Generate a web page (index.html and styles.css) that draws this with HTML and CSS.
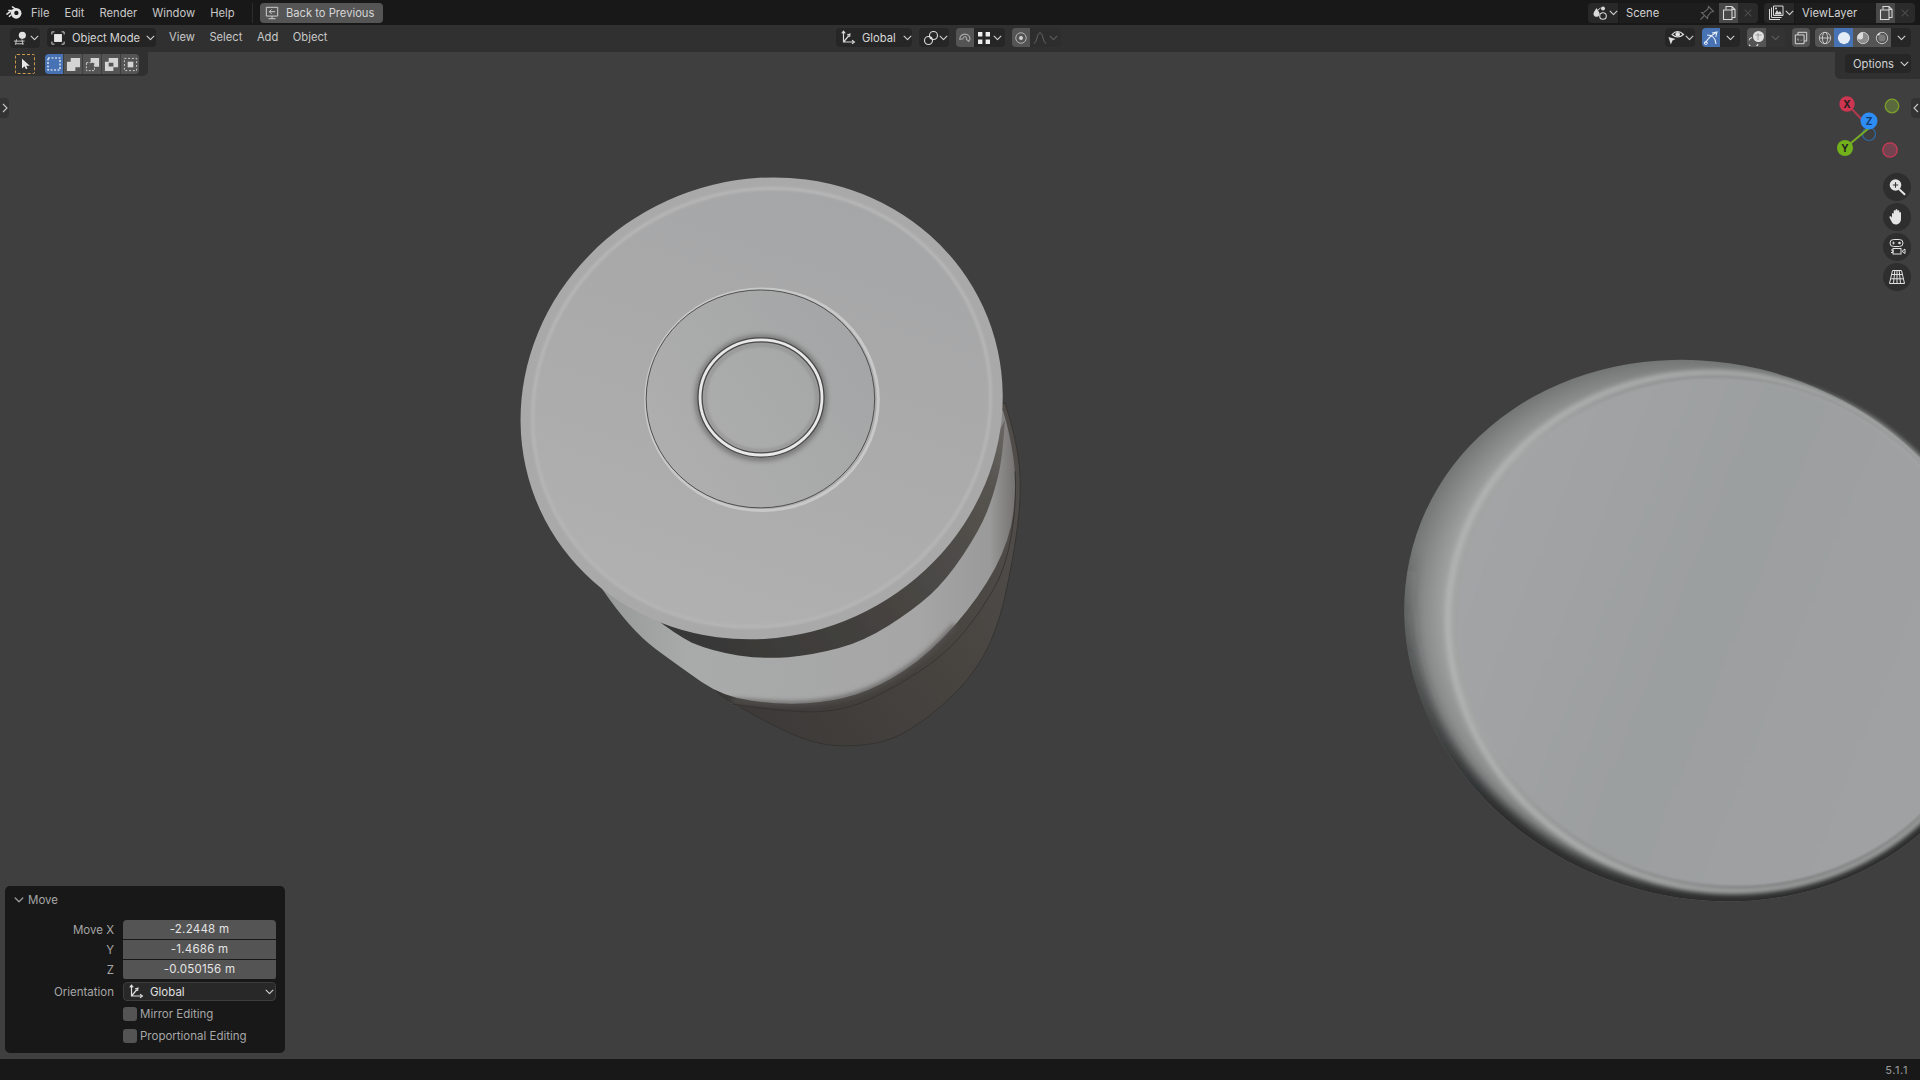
FILE: index.html
```html
<!DOCTYPE html>
<html lang="en">
<head>
<meta charset="utf-8">
<title>Blender</title>
<link rel="stylesheet" href="styles.css">
</head>
<body>
<svg class="defs" aria-hidden="true">
  <symbol id="chev" viewBox="0 0 10 6"><path d="M1.200 1 5 4.800 8.800 1" fill="none" stroke="currentColor" stroke-width="1.300" stroke-linecap="round" stroke-linejoin="round"/></symbol>
  <symbol id="orient" viewBox="0 0 16 16"><path d="M3.500 1.500v10.500h10M3.500 12 9 5.500" fill="none" stroke="currentColor" stroke-width="1.200"/><path d="M1.800 3.400 3.500 1.200 5.200 3.400M12 10.300l2.400 1.700-2.400 1.700M7 5l3-1-.4 3" fill="none" stroke="currentColor" stroke-width="1.100"/></symbol>
  <symbol id="copy" viewBox="0 0 16 16"><path d="M5 4.500V1.500h6l3 3v8H11M11 1.500v3h3" fill="none" stroke="currentColor" stroke-width="1.100"/><path d="M2.500 5H11v9.500H2.500z" fill="none" stroke="currentColor" stroke-width="1.100"/></symbol>
  <symbol id="cross" viewBox="0 0 12 12"><path d="M2 2l8 8M10 2l-8 8" stroke="currentColor" stroke-width="1.300"/></symbol>
</svg>

<header class="topbar">
  <svg class="logo" viewBox="0 0 18 15"><path d="M1 9.200 6 5.600 3 5.400h6.600" fill="none" stroke="#e4e4e4" stroke-width="1.600" stroke-linecap="round" stroke-linejoin="round"/><path d="M6.800 1.600 12 5" stroke="#e4e4e4" stroke-width="1.600" stroke-linecap="round"/><circle cx="10.800" cy="8.400" r="5.600" fill="#e4e4e4"/><circle cx="11" cy="7.900" r="2.300" fill="#181818"/><path d="M5.400 10 3 12" stroke="#e4e4e4" stroke-width="1.600"/></svg>
  <nav class="menu menu-top">
    <span>File</span><span>Edit</span><span>Render</span><span>Window</span><span>Help</span>
  </nav>
  <div class="sep"></div>
  <div class="back">
    <svg class="ico14" viewBox="0 0 16 16"><path d="M1.500 1.500h13v10h-13zM8 11.500v2.800M4 14.500h8M11.500 6.500H5M7.500 4 5 6.500 7.500 9" fill="none" stroke="#d2d2d2" stroke-width="1.100"/></svg>
    <span>Back to Previous</span>
  </div>
  <div class="top-right">
    <div class="idblock">
      <div class="id-browse">
        <svg class="ico16" viewBox="0 0 16 16"><path d="M4.500 3 7 7c1.400 2.400-.2 4.800-2.500 4.800S.6 9.400 2 7z" fill="#d8d8d8"/><circle cx="11" cy="3.400" r="2" fill="#d8d8d8"/><circle cx="11" cy="11" r="3.300" fill="none" stroke="#d8d8d8" stroke-width="1.100"/><path d="M5.600 5.400 8.500 3" stroke="#d8d8d8" stroke-width="1"/></svg>
        <svg class="chev" viewBox="0 0 10 6"><use href="#chev"/></svg>
      </div>
      <div class="id-field scene"><span>Scene</span>
        <svg class="ico16 pin" viewBox="0 0 16 16"><path d="M9.500 1.500 14.500 6.500 11.800 7.200 8.800 11l-.3 2.500-6-6L5 7.200 8.800 4.200zM5 11 1.500 14.500" fill="none" stroke="#666" stroke-width="1.100"/></svg>
      </div>
      <div class="id-btn"><svg class="ico16" viewBox="0 0 16 16"><use href="#copy"/></svg></div>
      <div class="id-x"><svg class="ico10" viewBox="0 0 12 12"><use href="#cross"/></svg></div>
    </div>
    <div class="idblock">
      <div class="id-browse">
        <svg class="ico16" viewBox="0 0 16 16"><path d="M1.500 4v10.500H12M3.500 2.500v10h10M5.500 1h9.500v9.500H5.500z" fill="none" stroke="#d8d8d8" stroke-width="1"/><path d="M6.500 9.500 9 5l1.600 2.400L12 6l2 3.500z" fill="#d8d8d8"/><circle cx="8" cy="3.500" r="1" fill="#d8d8d8"/></svg>
        <svg class="chev" viewBox="0 0 10 6"><use href="#chev"/></svg>
      </div>
      <div class="id-field layer"><span>ViewLayer</span></div>
      <div class="id-btn"><svg class="ico16" viewBox="0 0 16 16"><use href="#copy"/></svg></div>
      <div class="id-x"><svg class="ico10" viewBox="0 0 12 12"><use href="#cross"/></svg></div>
    </div>
  </div>
</header>

<main class="viewport">
  <svg class="scene-art" viewBox="0 20.420 1568 845.300" preserveAspectRatio="none" aria-hidden="true">
    <defs>
      <filter id="b05" x="-10%" y="-10%" width="120%" height="120%"><feGaussianBlur stdDeviation=".6"/></filter>
      <filter id="b1" x="-10%" y="-10%" width="120%" height="120%"><feGaussianBlur stdDeviation="1"/></filter>
      <filter id="b2" x="-10%" y="-10%" width="120%" height="120%"><feGaussianBlur stdDeviation="2.200"/></filter>
      <filter id="b4" x="-10%" y="-10%" width="120%" height="120%"><feGaussianBlur stdDeviation="4"/></filter>
      <clipPath id="discClip"><ellipse cx="1392" cy="515" rx="248" ry="218" transform="rotate(18.4 1392 515)"/></clipPath>
      <linearGradient id="back" gradientUnits="userSpaceOnUse" x1="600" y1="600" x2="830" y2="430"><stop offset="0" stop-color="#3b3937"/><stop offset=".6" stop-color="#474440"/><stop offset="1" stop-color="#4f4c49"/></linearGradient>
      <linearGradient id="mid" gradientUnits="userSpaceOnUse" x1="495" y1="480" x2="832" y2="480"><stop offset="0" stop-color="#989999"/><stop offset=".2" stop-color="#a9aaaa"/><stop offset=".75" stop-color="#a6a6a6"/><stop offset=".93" stop-color="#9a9a9a"/><stop offset="1" stop-color="#6f6d6b"/></linearGradient>
      <linearGradient id="groove" gradientUnits="userSpaceOnUse" x1="590" y1="530" x2="825" y2="345"><stop offset="0" stop-color="#393837"/><stop offset=".45" stop-color="#474441"/><stop offset=".85" stop-color="#56534f"/><stop offset="1" stop-color="#6b6965"/></linearGradient>
      <linearGradient id="cap" gradientUnits="userSpaceOnUse" x1="470" y1="510" x2="790" y2="170"><stop offset="0" stop-color="#b2b2b2"/><stop offset=".55" stop-color="#aaaaab"/><stop offset="1" stop-color="#a4a5a6"/></linearGradient>
      <linearGradient id="capIn" gradientUnits="userSpaceOnUse" x1="520" y1="400" x2="720" y2="260"><stop offset="0" stop-color="#b0b0b0"/><stop offset="1" stop-color="#a3a4a5"/></linearGradient>
      <radialGradient id="disc"><stop offset=".86" stop-color="#a2a4a4"/><stop offset=".93" stop-color="#8b8d8d"/><stop offset="1" stop-color="#747676"/></radialGradient>
      <linearGradient id="discShade" gradientUnits="userSpaceOnUse" x1="1230" y1="720" x2="1170" y2="520"><stop offset="0" stop-color="#2a2c2c"/><stop offset="1" stop-color="#2a2c2c" stop-opacity="0"/></linearGradient>
      <linearGradient id="face" gradientUnits="userSpaceOnUse" x1="1200" y1="500" x2="1568" y2="520"><stop offset="0" stop-color="#a3a4a6"/><stop offset=".5" stop-color="#9c9fa0"/><stop offset="1" stop-color="#a0a1a3"/></linearGradient>
    </defs>

    <path d="M590 569Q626 590.600 645 598.800Q664 607 677.700 608.500Q691.400 610 709 608Q726.800 605.800 743 595.700Q759.500 585.500 775.700 570.200Q792 555 803 536Q814 517 820.700 487Q827.500 457 831 429.900Q834.500 402.700 832.500 380.900Q830.500 359 820.700 329L491 480Z" fill="url(#back)" stroke="#33312f" stroke-width=".7"/>
    <path d="M491.400 480.500Q514.500 514.500 534.900 529.600Q555.300 544.700 573 556.900Q590.600 569 613.800 572.400Q637 575.700 658.800 574.400Q680.500 573 699.600 567Q718.600 561 739 547.300Q759.500 533.500 779.900 510.400Q800.300 487.300 812.600 464.200Q824.800 441 827.700 417.900Q830.500 394.700 827.700 374.300Q824.800 353.800 819 335Z" fill="url(#mid)" filter="url(#b05)"/>
    <path d="M598 572Q637 575.700 658.800 574.400Q680.500 573 699.600 567Q718.600 561 739 547.300Q759.500 533.500 779.900 510.400" fill="none" stroke="#565452" stroke-width="3" filter="url(#b2)"/>
    <path d="M598 575Q647.800 582.500 669.600 581.200Q691.400 580 711.800 570.500Q732.300 561 752.600 547.200Q773 533.500 786.600 517.200Q800.300 500.900 811 482Q822 463 826.200 435.600Q830.500 408 829 385" fill="none" stroke="#33312f" stroke-width=".7"/>
    <path d="M535 505Q550 517 565 525Q582.500 532.300 603 535.300Q623.400 538.300 643.700 536.700Q664 535 684.500 529.500Q705 524 725.500 511Q746 498 759.500 485.900Q773 473.700 786.500 453.300Q800 432.800 805.500 419.200Q811 405.600 815 389.300Q819 373 820.700 343L790 400Z" fill="url(#groove)" filter="url(#b05)"/>

    <ellipse cx="622" cy="333.500" rx="199" ry="186.400" transform="rotate(-24.5 622 333.500)" fill="#a9a9a9"/>
    <ellipse cx="622" cy="333" rx="188" ry="176" transform="rotate(-24.5 622 333)" fill="url(#cap)"/>
    <ellipse cx="622" cy="333" rx="189" ry="177" transform="rotate(-24.5 622 333)" fill="none" stroke="#b7b7b7" stroke-width="2.500" filter="url(#b1)"/>

    <ellipse cx="622.300" cy="326.500" rx="95" ry="90.500" fill="none" stroke="#c8c8c8" stroke-width="2.400" filter="url(#b05)"/>
    <ellipse cx="621" cy="325.800" rx="93.300" ry="89" fill="url(#capIn)" stroke="#4d4d4d" stroke-width=".8"/>
    <ellipse cx="621.500" cy="325" rx="51.500" ry="49" fill="none" stroke="#5e5e5e" stroke-width="5" opacity=".7" filter="url(#b2)"/>
    <ellipse cx="621.500" cy="325" rx="45.500" ry="43" fill="none" stroke="#8a8a8a" stroke-width="3" opacity=".45" filter="url(#b1)"/>
    <ellipse cx="621.500" cy="324.600" rx="49.800" ry="47" fill="none" stroke="#484848" stroke-width="4.400" filter="url(#b05)"/>
    <ellipse cx="621.500" cy="324.600" rx="49.800" ry="47" fill="none" stroke="#e8e8e8" stroke-width="2.300" filter="url(#b05)"/>

    <ellipse cx="1392" cy="515" rx="248" ry="218" transform="rotate(18.4 1392 515)" fill="url(#disc)"/>
    <g clip-path="url(#discClip)">
      <ellipse cx="1392" cy="515" rx="248" ry="218" transform="rotate(18.4 1392 515)" fill="none" stroke="url(#discShade)" stroke-width="16" filter="url(#b4)"/>
    </g>
    <ellipse cx="1410" cy="516" rx="220" ry="206" transform="rotate(18.4 1410 516)" fill="url(#face)" filter="url(#b1)"/>
    <ellipse cx="1407" cy="516" rx="226" ry="210" transform="rotate(18.4 1407 516)" fill="none" stroke="#b8baba" stroke-width="3.500" filter="url(#b2)"/>
  </svg>

  <div class="hdr">
    <div class="hdr-left">
      <div class="dd editor">
        <svg class="ico16" viewBox="0 0 18 16"><path d="M1 11.500h12M3 14.500h9M4 9.500l-1.200 6M10 9.500l1.200 6" fill="none" stroke="#d6d6d6" stroke-width="1"/><circle cx="10.500" cy="5" r="4" fill="#e2e2e2"/></svg>
        <svg class="chev" viewBox="0 0 10 6"><use href="#chev"/></svg>
      </div>
      <div class="dd mode">
        <svg class="ico14" viewBox="0 0 16 16"><path d="M1 4V1h3M12 1h3v3M15 12v3h-3M4 15H1v-3" fill="none" stroke="#cfcfcf" stroke-width="1.100"/><rect x="3.500" y="3.500" width="9" height="9" fill="#e6e6e6"/></svg>
        <span>Object Mode</span>
        <svg class="chev" viewBox="0 0 10 6"><use href="#chev"/></svg>
      </div>
      <nav class="menu menu-hdr"><span>View</span><span>Select</span><span>Add</span><span>Object</span></nav>
    </div>

    <div class="dd g-orient">
      <svg class="ico16" viewBox="0 0 16 16"><use href="#orient"/></svg>
      <span>Global</span>
      <svg class="chev" viewBox="0 0 10 6"><use href="#chev"/></svg>
    </div>
    <div class="dd g-pivot">
      <svg class="ico16" viewBox="0 0 16 16"><circle cx="5.500" cy="10.500" r="4" fill="none" stroke="#dcdcdc" stroke-width="1.100"/><circle cx="10.500" cy="5.500" r="4" fill="none" stroke="#dcdcdc" stroke-width="1.100"/><circle cx="8" cy="8" r="1.300" fill="#dcdcdc"/></svg>
      <svg class="chev" viewBox="0 0 10 6"><use href="#chev"/></svg>
    </div>
    <div class="seg g-snap">
      <div class="cell on-grey w18"><svg class="ico14" viewBox="0 0 16 16"><path d="M2 9.500a6 6 0 0 1 11-3.200c1 1.800.6 4.200-.8 5.700l-2.700-2.600c1-1.400-.5-3.600-2.500-2.700-.8.400-1.200 1.200-1.300 2.300z" fill="none" stroke="#a8a8a8" stroke-width="1.200"/></svg></div>
      <div class="cell dark w31">
        <svg class="ico14" viewBox="0 0 14 14"><path d="M1 1h4.400v4.400H1zM8.600 1H13v4.400H8.600zM1 8.600h4.400V13H1zM8.600 8.600H13V13H8.600z" fill="#eee"/></svg>
        <svg class="chev" viewBox="0 0 10 6"><use href="#chev"/></svg>
      </div>
    </div>
    <div class="seg g-prop">
      <div class="cell on-grey w18"><svg class="ico14" viewBox="0 0 16 16"><circle cx="8" cy="8" r="6" fill="none" stroke="#b4b4b4" stroke-width="1.100"/><circle cx="8" cy="8" r="2.200" fill="#d6d6d6"/></svg></div>
      <div class="cell dim w31">
        <svg class="ico14" viewBox="0 0 16 16"><path d="M1 14c3.500 0 3.500-12 7-12s3.500 12 7 12" fill="none" stroke="#686868" stroke-width="1.100"/></svg>
        <svg class="chev chev-dim" viewBox="0 0 10 6"><use href="#chev"/></svg>
      </div>
    </div>

    <div class="hdr-right">
      <div class="dd g-vis">
        <svg class="ico18" viewBox="0 0 18 16"><path d="M5 4.500Q10.500 -1.500 16.500 4.500 10.500 9.500 5 4.500z" fill="none" stroke="#e2e2e2" stroke-width="1.100"/><circle cx="10.700" cy="4.200" r="2.300" fill="#e2e2e2"/><path d="M1.500 7 8.500 9 5.500 10.500 3.800 14.500z" fill="#e2e2e2"/></svg>
        <svg class="chev" viewBox="0 0 10 6"><use href="#chev"/></svg>
      </div>
      <div class="seg g-gizmo">
        <div class="cell blue w18"><svg class="ico16" viewBox="0 0 16 16"><path d="M2.500 13C5 8 8.500 5 13.500 2.500M9 3l5-1-1.200 4.800M4 5c5 0 8.500 3 9 9" fill="none" stroke="#e4ecf8" stroke-width="1.100"/><circle cx="2.800" cy="13" r="1.500" fill="none" stroke="#e4ecf8"/></svg></div>
        <div class="cell dark w20"><svg class="chev" viewBox="0 0 10 6"><use href="#chev"/></svg></div>
      </div>
      <div class="seg g-over">
        <div class="cell on-grey w19"><svg class="ico16" viewBox="0 0 16 16"><circle cx="9.500" cy="6.500" r="5.500" fill="#e0e0e0"/><path d="M9 3v7M6.500 5h6" stroke="#8a8a8a" stroke-width=".8"/><path d="M3 7.500a5 5 0 1 0 6 6.500" fill="none" stroke="#dcdcdc" stroke-width="1.200"/></svg></div>
        <div class="cell dim2 w19"><svg class="chev chev-dim" viewBox="0 0 10 6"><use href="#chev"/></svg></div>
      </div>
      <div class="seg g-xray">
        <div class="cell on-grey w18"><svg class="ico14" viewBox="0 0 16 16"><path d="M4.500 4.500V1.500h10v10h-3" fill="none" stroke="#dcdcdc" stroke-width="1.100"/><path d="M1.500 4.500h10v10h-10z" fill="#4b4b4b" stroke="#dcdcdc" stroke-width="1.100"/><path d="M4.500 8.500v2h.8M8.500 10.500h-.8" stroke="#dcdcdc" stroke-width="1"/></svg></div>
      </div>
      <div class="seg g-shade">
        <div class="cell on-grey w19"><svg class="ico14" viewBox="0 0 16 16"><circle cx="8" cy="8" r="6.500" fill="none" stroke="#cfcfcf" stroke-width="1"/><ellipse cx="8" cy="8" rx="3" ry="6.500" fill="none" stroke="#cfcfcf" stroke-width="1"/><path d="M1.500 8h13" stroke="#cfcfcf"/></svg></div>
        <div class="cell blue w19"><svg class="ico14" viewBox="0 0 16 16"><circle cx="8" cy="8" r="7" fill="#e4ecf8"/></svg></div>
        <div class="cell on-grey w19"><svg class="ico14" viewBox="0 0 16 16"><circle cx="8" cy="8" r="6.500" fill="#8c8c8c" stroke="#cfcfcf"/><path d="M8 1.500a6.500 6.500 0 0 0-6.500 6.500c2 2 4 2.500 6.500 0z" fill="#dcdcdc"/></svg></div>
        <div class="cell on-grey w19"><svg class="ico14" viewBox="0 0 16 16"><circle cx="8" cy="8" r="6.500" fill="none" stroke="#cfcfcf"/><circle cx="8" cy="8" r="4" fill="#7b7b7b"/><path d="M3 5a6 6 0 0 1 3-2" stroke="#eee" stroke-width="1.500" fill="none"/></svg></div>
        <div class="cell dark w20"><svg class="chev" viewBox="0 0 10 6"><use href="#chev"/></svg></div>
      </div>
    </div>
  </div>

  <div class="subrow">
    <div class="toolopts">
      <div class="active-tool">
        <svg class="ico12" viewBox="0 0 12 12"><path d="M3 .8v9.800l2.500-2.300 1.500 3 1.500-.7L7.200 7.700H10.800z" fill="#e8e8e8"/></svg>
      </div>
      <div class="seg selmodes">
        <div class="cell blue w18"><svg class="ico14" viewBox="0 0 14 14"><rect x="1" y="1" width="12" height="12" fill="none" stroke="#fff" stroke-width="1.200" stroke-dasharray="2 1.500"/></svg></div>
        <div class="cell on-grey w19"><svg class="ico15" viewBox="0 0 16 16"><path d="M5 1h10v10h-5v4H1V5h4z" fill="#d4d4d4"/></svg></div>
        <div class="cell on-grey w19"><svg class="ico15" viewBox="0 0 16 16"><path d="M6 1h9v9.500H10V6H6z" fill="#d4d4d4"/><rect x="1.500" y="6" width="8.500" height="8.500" fill="none" stroke="#d4d4d4" stroke-dasharray="2 1.500"/></svg></div>
        <div class="cell on-grey w19"><svg class="ico15" viewBox="0 0 16 16"><path d="M5 1h10v10h-5V6H5zM1 5h4v5h5v5H1z" fill="#d4d4d4"/></svg></div>
        <div class="cell on-grey w19"><svg class="ico15" viewBox="0 0 16 16"><rect x="1.500" y="1.500" width="13" height="13" fill="none" stroke="#d4d4d4" stroke-dasharray="2 2"/><rect x="5" y="5" width="6" height="6" fill="#d4d4d4"/></svg></div>
      </div>
    </div>
    <div class="optionswrap"><div class="dd options"><span>Options</span><svg class="chev" viewBox="0 0 10 6"><use href="#chev"/></svg></div></div>
  </div>

  <div class="tab tab-left"><svg viewBox="0 0 6 10"><path d="M1 1l4 4-4 4" fill="none" stroke="#c8c8c8" stroke-width="1.100"/></svg></div>
  <div class="tab tab-right"><svg viewBox="0 0 6 10"><path d="M5 1 1 5l4 4" fill="none" stroke="#c8c8c8" stroke-width="1.100"/></svg></div>

  <svg class="gizmo" viewBox="0 0 64 64">
    <circle cx="37" cy="37" r="6.500" fill="#3f3f3f" stroke="#2f6aa8" stroke-width="1.200"/>
    <circle cx="60" cy="9" r="6.800" fill="#5a6a3c" stroke="#7a9d2c" stroke-width="1.300"/>
    <circle cx="58" cy="53" r="7.200" fill="#74434f" stroke="#cc3a58" stroke-width="1.300"/>
    <path d="M15 7 37 30" stroke="#b03a50" stroke-width="2"/>
    <path d="M13 51 37 31" stroke="#77ae25" stroke-width="2"/>
    <circle cx="15" cy="7" r="7.700" fill="#cd3550"/>
    <circle cx="13" cy="51" r="8" fill="#72b01c"/>
    <circle cx="37" cy="24" r="8.500" fill="#2e8cf5"/>
    <text x="15" y="10.500" class="gz">X</text>
    <text x="13" y="54.500" class="gz">Y</text>
    <text x="37" y="27.500" class="gz gz-z">Z</text>
  </svg>

  <div class="navs">
    <div class="navbtn"><svg viewBox="0 0 18 18"><circle cx="7.500" cy="7" r="5.800" fill="#e4e4e4"/><path d="M7.500 4.300v5.400M4.800 7h5.400" stroke="#333" stroke-width="1.100"/><path d="M11.500 11.500 16.500 16.200" stroke="#e4e4e4" stroke-width="2" stroke-linecap="round"/></svg></div>
    <div class="navbtn"><svg viewBox="0 0 18 18"><path d="M4 10V6c0-1.300 1.700-1.300 1.700 0V3.200c0-1.300 1.800-1.300 1.800 0V2.400c0-1.400 2-1.400 2 0v.9c0-1.300 1.800-1.300 1.800 0V5c0-1.200 1.700-1.200 1.700 0v6c0 3-2.200 5.500-5 5.500-2.500 0-3.500-1.200-4.500-3L1.600 9.700c-.7-1.300.9-2 1.700-1.100z" fill="#e4e4e4"/></svg></div>
    <div class="navbtn"><svg viewBox="0 0 18 18"><rect x="2" y="1.500" width="13" height="7" rx="3.500" fill="none" stroke="#e0e0e0"/><circle cx="11.500" cy="5" r="1.300" fill="#e0e0e0"/><path d="M4 5h3M5.500 3.500v3" stroke="#e0e0e0" stroke-width=".8"/><rect x="5" y="10.500" width="8" height="5.500" fill="none" stroke="#e0e0e0"/><path d="M3 12h2v2.500H3M17 11v4.500l-3-2.200z" fill="none" stroke="#e0e0e0"/></svg></div>
    <div class="navbtn"><svg viewBox="0 0 18 18"><path d="M4.500 2.500h9L16.500 15.500h-15zM9 2.500v13M3.400 6.500h11.200M2.500 10.800h13M6.800 2.500 5.500 15.500M11.200 2.500l1.300 13" fill="none" stroke="#e0e0e0" stroke-width="1"/></svg></div>
  </div>

  <section class="panel">
    <div class="panel-head"><svg class="chev chev-panel" viewBox="0 0 10 6"><use href="#chev"/></svg><span>Move</span></div>
    <div class="rows">
      <div class="labels">
        <span>Move X</span><span>Y</span><span>Z</span>
      </div>
      <div class="fields">
        <div>-2.2448 m</div><div>-1.4686 m</div><div>-0.050156 m</div>
      </div>
    </div>
    <div class="orient-row">
      <span class="orient-label">Orientation</span>
      <div class="orient-dd">
        <svg class="ico16" viewBox="0 0 16 16"><use href="#orient"/></svg>
        <span>Global</span>
        <svg class="chev" viewBox="0 0 10 6"><use href="#chev"/></svg>
      </div>
    </div>
    <div class="check"><i></i><span>Mirror Editing</span></div>
    <div class="check"><i></i><span>Proportional Editing</span></div>
  </section>
</main>

<footer class="status"><span>5.1.1</span></footer>
</body>
</html>
```

FILE: styles.css
```css
* { box-sizing: border-box; }
html, body { margin: 0; height: 100%; }
body {
  width: 1920px; height: 1080px; overflow: hidden;
  display: flex; flex-direction: column;
  font: 11.2px/16px Inter, "Liberation Sans", sans-serif;
  color: #d2d2d2; background: #3f3f3f;
  white-space: nowrap;
}
.defs { position: absolute; width: 0; height: 0; }
svg { display: block; flex: none; }
.ico10 { width: 10px; height: 10px; }
.ico12 { width: 12px; height: 12px; }
.ico14 { width: 14px; height: 14px; }
.ico15 { width: 15px; height: 15px; }
.ico16 { width: 16px; height: 16px; }
.ico18 { width: 18px; height: 16px; }
.chev { width: 9px; height: 6px; color: #cfcfcf; }
.chev-dim { color: #5c5c5c; }

/* top bar */
.topbar { height: 25px; background: #181818; display: flex; align-items: center; padding-left: 6px; flex: none; }
.logo { width: 17px; height: 15px; }
.menu { display: flex; }
.menu-top { margin-left: 8px; width: 205px; gap: 15px; color: #c8c8c8; }
.sep { width: 1px; height: 20px; background: #2c2c2c; margin-left: 16px; }
.back { margin-left: 7px; width: 123px; height: 20px; background: #555; border-radius: 4px; display: flex; align-items: center; gap: 7px; padding-left: 5px; color: #d6d6d6; }
.top-right { margin-left: auto; display: flex; gap: 6px; padding-right: 5px; }
.idblock { display: flex; height: 20px; border-radius: 4px; overflow: hidden; }
.id-browse { width: 31px; background: #282828; display: flex; align-items: center; padding-left: 4px; gap: 1px; border-right: 1px solid #181818; }
.id-field { background: #1d1d1d; display: flex; align-items: center; padding-left: 7px; color: #d2d2d2; }
.scene { width: 100px; }
.layer { width: 81px; }
.pin { margin-left: auto; margin-right: 4px; }
.id-btn { width: 19px; background: #484848; display: flex; align-items: center; justify-content: center; color: #d8d8d8; }
.id-x { width: 20px; background: #2a2a2a; display: flex; align-items: center; justify-content: center; color: #4c4c4c; }

/* viewport */
.viewport { position: relative; flex: 1; min-height: 0; }
.scene-art { position: absolute; left: 0; top: 0; width: 1920px; height: 1035px; }

.hdr { position: relative; height: 27px; background: #303030; display: flex; align-items: flex-start; padding: 3px 9px 0 10px; }
.hdr-left { width: 826px; display: flex; align-items: flex-start; }
.dd { display: flex; align-items: center; height: 19px; background: #262626; border-radius: 4px; }
.editor { width: 30px; padding-left: 3px; gap: 1px; height: 20px; }
.mode { width: 109px; margin-left: 7px; padding-left: 4px; background: #242424; color: #d4d4d4; }
.mode span { margin-left: 7px; margin-right: 7px; width: 67px; }
.menu-hdr { margin-left: 13px; gap: 14.5px; color: #c8c8c8; line-height: 19px; }
.g-orient { width: 76px; padding-left: 4px; color: #d8d8d8; }
.g-orient span { margin-left: 6px; margin-right: 7px; width: 34px; }
.g-pivot { margin-left: 7px; width: 30px; padding-left: 4px; gap: 0; }
.seg { display: flex; height: 19px; border-radius: 4px; overflow: hidden; }
.g-snap { margin-left: 7px; }
.g-prop { margin-left: 7px; }
.cell { height: 100%; display: flex; align-items: center; justify-content: center; gap: 2px; }
.w18 { width: 18px; } .w19 { width: 19px; } .w20 { width: 20px; } .w31 { width: 31px; }
.on-grey { background: #545454; }
.dark { background: #262626; }
.dim { background: #2d2d2d; }
.dim2 { background: #333; }
.blue { background: #4772b3; }
.hdr-right { margin-left: auto; display: flex; gap: 7px; }
.g-vis { width: 30px; padding-left: 2px; gap: 0; }
.g-xray { width: 18px; }
.g-shade { margin-left: -2px; }

.subrow { position: relative; display: flex; justify-content: space-between; align-items: flex-start; }
.toolopts { width: 148px; height: 24px; background: #303030; border-bottom-right-radius: 5px; display: flex; align-items: center; padding-left: 15px; gap: 10px; }
.active-tool { width: 20px; height: 20px; border: 1.5px dashed #c89a4a; border-radius: 2px; display: flex; align-items: center; justify-content: center; }
.selmodes { height: 20px; }
.selmodes .cell + .cell { border-left: 1px solid #3d3d3d; }
.optionswrap { width: 85px; height: 27px; background: #303030; border-bottom-left-radius: 5px; padding: 2px 9px 0 10px; }
.options { width: 66px; padding-left: 8px; gap: 6px; background: #262626; color: #d2d2d2; }

.tab { position: absolute; width: 9px; height: 20px; background: #333; display: flex; align-items: center; justify-content: center; }
.tab svg { width: 6px; height: 10px; }
.tab-left { left: 0; top: 73px; border-radius: 0 4px 4px 0; }
.tab-right { right: 0; top: 73px; border-radius: 4px 0 0 4px; }

.gizmo { position: absolute; left: 1832px; top: 72px; width: 64px; height: 64px; overflow: visible; }
.gz { font: 700 10px Inter, sans-serif; text-anchor: middle; fill: #1e1e1e; }
.gz-z { fill: #123a6a; }

.navs { position: absolute; left: 1883px; top: 148px; display: flex; flex-direction: column; gap: 2px; }
.navbtn { width: 28px; height: 28px; border-radius: 50%; background: #2e2e2e; display: flex; align-items: center; justify-content: center; }
.navbtn svg { width: 18px; height: 18px; }

/* operator panel */
.panel { position: absolute; left: 5px; bottom: 6px; width: 280px; height: 167px; background: #181818; border-radius: 5px; padding: 5px 9px 0 9px; color: #a6a6a6; font-size: 11.5px; }
.panel-head { height: 17px; display: flex; align-items: center; gap: 4px; font-size: 11.5px; }
.chev-panel { color: #9a9a9a; width: 10px; height: 6px; }
.rows { display: flex; margin-top: 11px; padding-top: 1px; }
.labels { width: 100px; display: flex; flex-direction: column; text-align: right; }
.labels span { height: 20px; line-height: 20px; }
.fields { margin-left: 9px; width: 153px; border-radius: 4px; overflow: hidden; display: flex; flex-direction: column; gap: 1px; color: #e4e4e4; letter-spacing: .25px; }
.fields div { height: 19px; line-height: 19px; background: #545454; text-align: center; }
.orient-row { display: flex; align-items: center; margin-top: 2px; height: 19px; }
.orient-label { width: 100px; text-align: right; }
.orient-dd { margin-left: 9px; width: 153px; height: 19px; background: #282828; border: 1px solid #3d3d3d; border-radius: 4px; display: flex; align-items: center; padding-left: 4px; gap: 6px; color: #e0e0e0; }
.orient-dd .chev { margin-left: auto; margin-right: 1px; }
.check { display: flex; align-items: center; height: 14px; margin-left: 109px; margin-top: 6px; gap: 3px; }
.check + .check { margin-top: 8px; }
.check i { width: 14px; height: 14px; background: #545454; border-radius: 3px; }

.status { height: 21px; flex: none; background: #181818; display: flex; align-items: center; justify-content: flex-end; padding-right: 12px; font-size: 11px; color: #9c9c9c; letter-spacing: .6px; }
```
